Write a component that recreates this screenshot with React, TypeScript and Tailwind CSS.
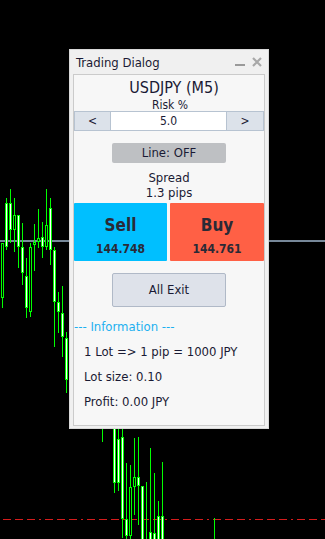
import React from "react";

type C = { x: number; wt: number; bt: number; bb: number; wb: number; f: "w" | "b" };

const candles: C[] = [
  { x: 1, wt: 243, bt: 243, bb: 298, wb: 308, f: "b" },
  { x: 5, wt: 198, bt: 203, bb: 247, wb: 250, f: "w" },
  { x: 9, wt: 189, bt: 203, bb: 230, wb: 243, f: "w" },
  { x: 13, wt: 198, bt: 215, bb: 230, wb: 252, f: "b" },
  { x: 17, wt: 215, bt: 215, bb: 247, wb: 268, f: "w" },
  { x: 21, wt: 223, bt: 247, bb: 273, wb: 285, f: "w" },
  { x: 25, wt: 258, bt: 276, bb: 308, wb: 318, f: "w" },
  { x: 29, wt: 243, bt: 247, bb: 312, wb: 317, f: "b" },
  { x: 33, wt: 224, bt: 242, bb: 245, wb: 271, f: "b" },
  { x: 37, wt: 209, bt: 238, bb: 242, wb: 248, f: "b" },
  { x: 41, wt: 222, bt: 237, bb: 247, wb: 258, f: "w" },
  { x: 45, wt: 189, bt: 225, bb: 247, wb: 250, f: "b" },
  { x: 49, wt: 198, bt: 208, bb: 250, wb: 265, f: "w" },
  { x: 53, wt: 247, bt: 250, bb: 302, wb: 347, f: "w" },
  { x: 57, wt: 292, bt: 302, bb: 312, wb: 333, f: "w" },
  { x: 61, wt: 286, bt: 313, bb: 337, wb: 357, f: "w" },
  { x: 65, wt: 332, bt: 338, bb: 380, wb: 393, f: "w" },
  { x: 113, wt: 420, bt: 420, bb: 483, wb: 493, f: "w" },
  { x: 117, wt: 420, bt: 439, bb: 483, wb: 491, f: "w" },
  { x: 121, wt: 420, bt: 437, bb: 519, wb: 538, f: "w" },
  { x: 125, wt: 463, bt: 519, bb: 536, wb: 540, f: "w" },
  { x: 129, wt: 465, bt: 487, bb: 536, wb: 540, f: "b" },
  { x: 133, wt: 438, bt: 477, bb: 487, wb: 515, f: "b" },
  { x: 137, wt: 437, bt: 477, bb: 486, wb: 525, f: "w" },
  { x: 141, wt: 486, bt: 486, bb: 545, wb: 545, f: "w" },
  { x: 149, wt: 448, bt: 532, bb: 545, wb: 545, f: "w" },
  { x: 153, wt: 473, bt: 533, bb: 545, wb: 545, f: "w" },
  { x: 157, wt: 501, bt: 516, bb: 545, wb: 545, f: "w" },
  { x: 161, wt: 462, bt: 516, bb: 545, wb: 545, f: "w" },
];

function Chart() {
  return (
    <svg className="absolute inset-0" width={325} height={539} viewBox="0 0 325 539">
      <rect x={0} y={240} width={325} height={2} fill="#778899" />
      <line x1={3} y1={519.5} x2={325} y2={519.5} stroke="#d41c1c" strokeWidth={1} strokeDasharray="8 4 8 4 8 4 2 4" />
      {candles.map((c, i) => (
        <g key={i}>
          <line x1={c.x + 1.5} y1={c.wt} x2={c.x + 1.5} y2={c.wb} stroke="#00ff00" strokeWidth={1} />
          <rect x={c.x + 0.5} y={c.bt + 0.5} width={2} height={Math.max(1, c.bb - c.bt - 1)} fill={c.f === "w" ? "#ffffff" : "#000000"} stroke="#00ff00" strokeWidth={1} />
        </g>
      ))}
      <line x1={102.5} y1={428} x2={102.5} y2={442} stroke="#00ff00" />
      <line x1={146.5} y1={482} x2={146.5} y2={539} stroke="#00ff00" />
      <line x1={214.5} y1={518} x2={214.5} y2={539} stroke="#00ff00" />
    </svg>
  );
}

export default function App() {
  const font = { fontFamily: '"DejaVu Sans Condensed", "DejaVu Sans", Tahoma, sans-serif' };
  return (
    <div className="relative w-[325px] h-[539px] bg-black overflow-hidden" style={font}>
      <Chart />
      <div className="absolute left-[69px] top-[49px] w-[200px] h-[380px] bg-[#f0f0f0] border border-[#d8d8d8] flex flex-col text-[#1a1a34]">
        <div className="h-[24px] flex items-center justify-between pl-[6px] pr-[6px]">
          <span className="text-[13px] leading-none">Trading Dialog</span>
          <div className="flex items-center gap-[7px]">
            <span className="block w-[10px] h-[2px] bg-[#9a9a9a] mt-[6px]" />
            <svg width="10" height="10" viewBox="0 0 10 10">
              <path d="M1 1L9 9M9 1L1 9" stroke="#a8a8a8" strokeWidth="2.2" />
            </svg>
          </div>
        </div>
        <div className="mx-[3px] mb-[2px] flex-1 bg-[#f7f7f7] border border-[#cbcbcb] flex flex-col">
          <div className="h-[24px] flex items-center justify-center text-[16px] pt-[1px] pl-[10px]">USDJPY (M5)</div>
          <div className="h-[12px] flex items-center justify-center text-[12px] pl-[2px]">Risk %</div>
          <div className="h-[20px] flex">
            <div className="w-[37px] bg-[#dce2ea] border border-[#b7c3d1] flex items-center justify-center text-[12px]">&lt;</div>
            <div className="w-[115px] bg-white border border-[#b7c3d1] border-x-0 flex items-center justify-center text-[12px]">5.0</div>
            <div className="w-[38px] bg-[#dce2ea] border border-[#b7c3d1] flex items-center justify-center text-[12px]">&gt;</div>
          </div>
          <div className="h-[20px] mt-[12px] mx-auto w-[114px] bg-[#bec0c3] rounded-[2px] flex items-center justify-center text-[13px]">Line: OFF</div>
          <div className="mt-[7px] h-[15px] flex items-center justify-center text-[13px]">Spread</div>
          <div className="h-[15px] flex items-center justify-center text-[13px]">1.3 pips</div>
          <div className="mt-[3px] h-[58px] flex gap-[3px]">
            <div className="w-[93px] bg-[#00bfff] rounded-[1px] flex flex-col items-center text-[#2a2a36]">
              <span className="text-[17px] font-bold leading-none mt-[14px]">Sell</span>
              <span className="text-[12px] font-bold leading-none mt-[9px]">144.748</span>
            </div>
            <div className="flex-1 bg-[#ff6045] rounded-[1px] flex flex-col items-center text-[#2a2a36]">
              <span className="text-[17px] font-bold leading-none mt-[14px]">Buy</span>
              <span className="text-[12px] font-bold leading-none mt-[9px]">144.761</span>
            </div>
          </div>
          <div className="mt-[12px] h-[34px] mx-auto w-[114px] bg-[#dee2ea] border border-[#b0b9c7] rounded-[2px] flex items-center justify-center text-[13px]">All Exit</div>
          <div className="mt-[13px] h-[14px] flex items-center text-[13px] text-[#1cb0f0]">--- Information ---</div>
          <div className="mt-[11px] h-[14px] flex items-center pl-[10px] text-[13px]">1 Lot =&gt; 1 pip = 1000 JPY</div>
          <div className="mt-[11px] h-[14px] flex items-center pl-[10px] text-[13px]">Lot size: 0.10</div>
          <div className="mt-[11px] h-[14px] flex items-center pl-[10px] text-[13px]">Profit: 0.00 JPY</div>
        </div>
      </div>
    </div>
  );
}
